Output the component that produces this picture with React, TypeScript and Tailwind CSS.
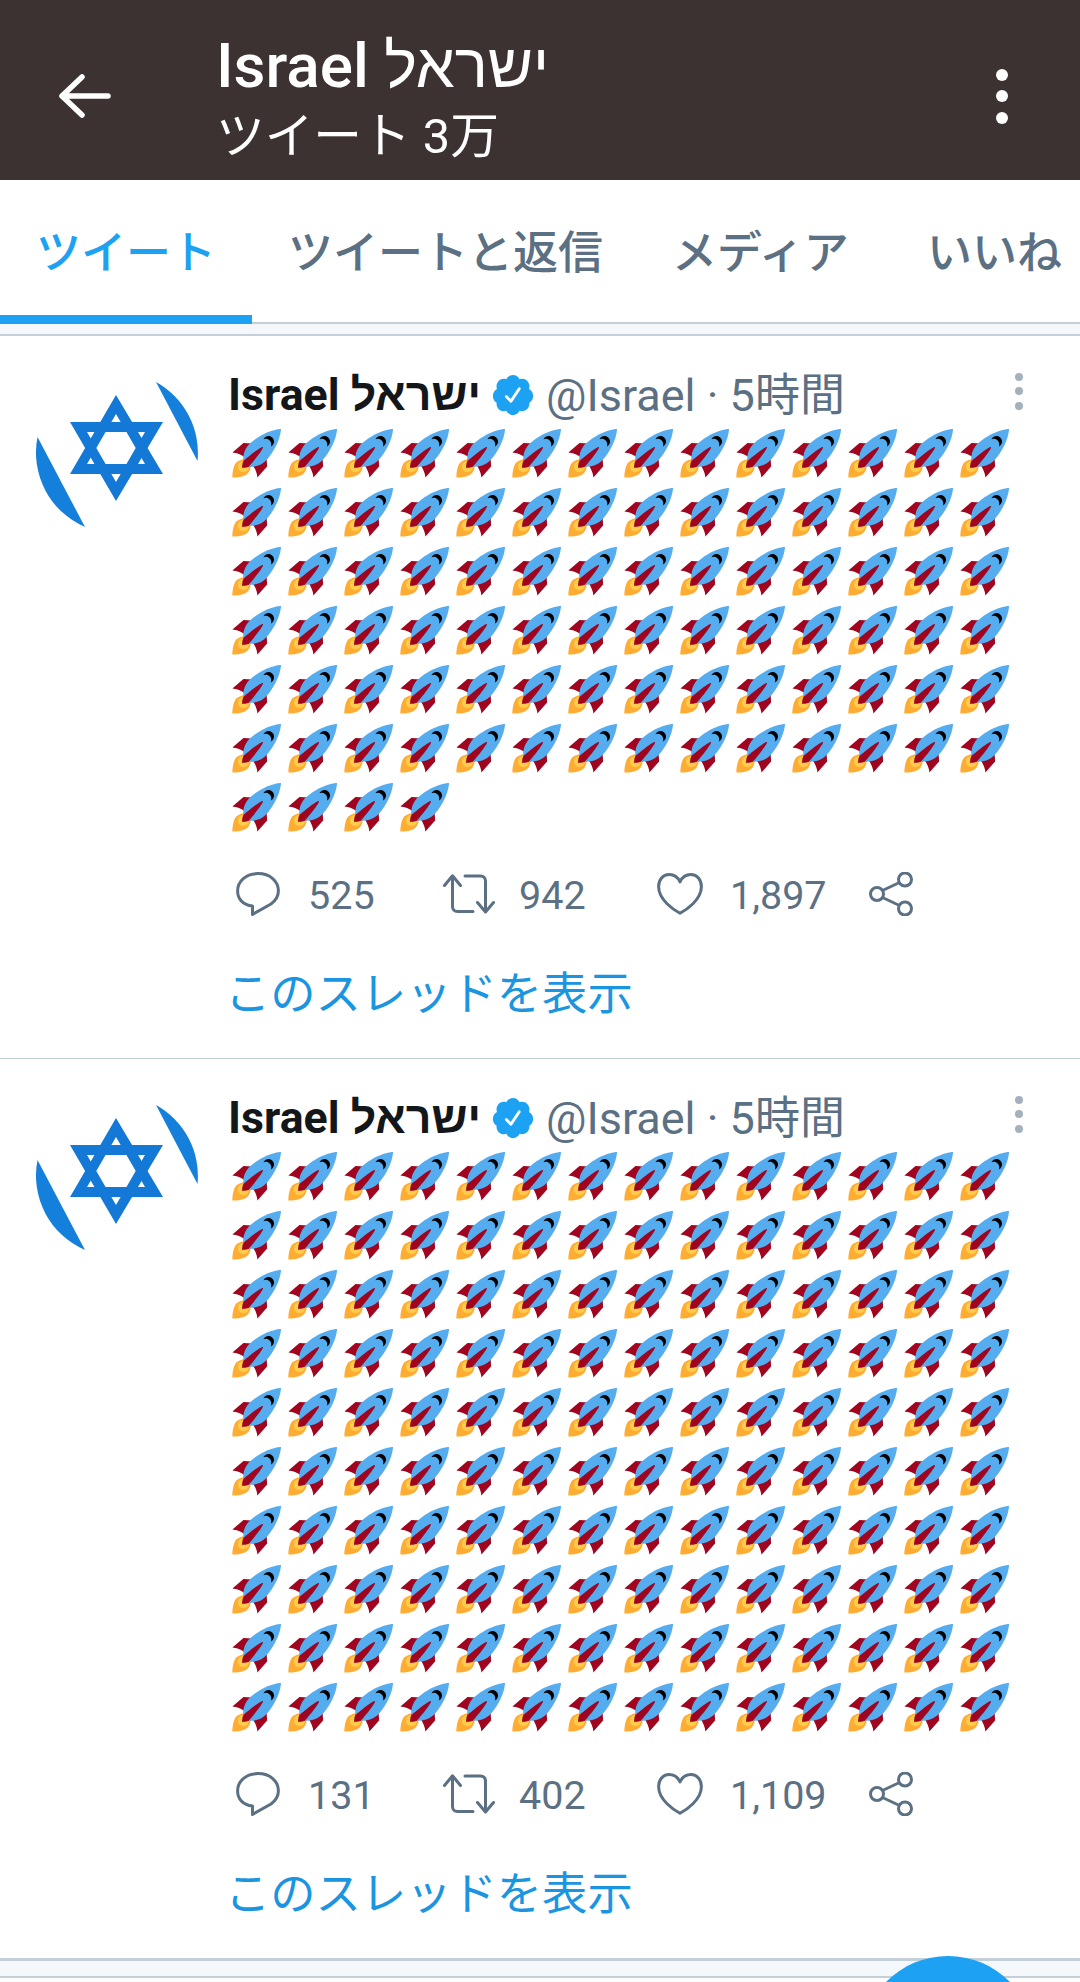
const font = "font-['Roboto','Liberation_Sans','Noto_Sans_CJK_JP',sans-serif]"

function Rocket() {
  return (
    <svg viewBox="0 0 36 36" className="w-[50px] h-[50px]">
      <path fill="#A0041E" d="M1 17l8-7 16 1 1 16-7 8s.001-5.999-6-12-12-6-12-6z" />
      <path fill="#FFAC33" d="M.973 35s-.036-7.979 2.985-11S15 21.187 15 21.187 14.999 29 11.999 32c-3 3-11.026 3-11.026 3z" />
      <circle fill="#FFCC4D" cx="8.999" cy="27" r="4" />
      <path fill="#55ACEE" d="M35.999 0s-10 0-22 10c-6 5-6 14-4 16s11 2 16-4c10-12 10-22 10-22z" />
      <path d="M26.999 5c-1.623 0-3.013.971-3.641 2.36.502-.227 1.055-.36 1.641-.36 2.209 0 4 1.791 4 4 0 .586-.133 1.139-.359 1.64 1.389-.627 2.359-2.017 2.359-3.64 0-2.209-1.791-4-4-4z" />
      <path fill="#A0041E" d="M8 28s0-4 1-5 13.001-10.999 14-10-9.001 13-10.001 14S8 28 8 28z" />
    </svg>
  )
}

function Avatar() {
  return (
    <svg viewBox="0 0 162 162" className="w-[162px] h-[162px]">
      <path fill="#1580dc" d="M120 8A81 81 0 0 1 161.5 87Z" />
      <path fill="#1580dc" d="M1.5 63A81 81 0 0 0 49 153Z" />
      <path fill="#1378d6" fillRule="evenodd" d="M80 21L127 100H34ZM80 40L51 90H109Z" />
      <path fill="#1378d6" fillRule="evenodd" d="M80 127L127 48H34ZM80 108L109 58H51Z" />
    </svg>
  )
}

function Badge() {
  return (
    <svg viewBox="0 0 24 24" className="w-[46px] h-[46px] shrink-0" fill="#1da1f2">
      <path d="M22.5 12.5c0-1.58-.875-2.95-2.148-3.6.154-.435.238-.905.238-1.4 0-2.21-1.71-3.998-3.818-3.998-.47 0-.92.084-1.336.25C14.818 2.415 13.51 1.5 12 1.5s-2.816.917-3.437 2.25c-.415-.165-.866-.25-1.336-.25-2.11 0-3.818 1.79-3.818 4 0 .494.083.964.237 1.4-1.272.65-2.147 2.018-2.147 3.6 0 1.495.782 2.798 1.942 3.486-.02.17-.032.34-.032.514 0 2.21 1.708 4 3.818 4 .47 0 .92-.086 1.335-.25.62 1.334 1.926 2.25 3.437 2.25 1.512 0 2.818-.916 3.437-2.25.415.163.865.248 1.336.248 2.11 0 3.818-1.79 3.818-4 0-.174-.012-.344-.033-.513 1.158-.687 1.943-1.99 1.943-3.484zm-6.616-3.334l-4.334 6.5c-.145.217-.382.334-.625.334-.143 0-.288-.04-.416-.126l-.115-.094-2.415-2.415c-.293-.293-.293-.768 0-1.06s.768-.294 1.06 0l1.77 1.767 3.825-5.74c.23-.345.696-.436 1.04-.207.346.23.44.696.21 1.04z" />
    </svg>
  )
}

function CommentIcon() {
  return (
    <svg viewBox="0 0 44 44" className="w-[44px] h-[44px]" fill="none" stroke="#5b7083" strokeWidth="3" strokeLinejoin="round">
      <path d="M16.5 42.4V34C7 33 1.6 27 1.6 19C1.6 9 10 1.6 22 1.6C34 1.6 42.4 9 42.4 19C42.4 25 39 29 35 32Z" />
    </svg>
  )
}

function RetweetIcon() {
  return (
    <svg viewBox="0 0 52 40" className="w-[52px] h-[40px]" fill="none" stroke="#5b7083" strokeWidth="3" strokeLinecap="round" strokeLinejoin="round">
      <path d="M1.5 11.5L9.5 1.8L17.5 11.5M9.5 2.5V32.5C9.5 35.5 11.5 37.5 14.5 37.5H30" />
      <path d="M50.5 28.5L42.5 38L34.5 28.5M42.5 37.5V7C42.5 4 40.5 2 37.5 2H22" />
    </svg>
  )
}

function HeartIcon() {
  return (
    <svg viewBox="0 0 46 42" className="w-[46px] h-[42px]" fill="none" stroke="#5b7083" strokeWidth="3" strokeLinejoin="round">
      <path d="M23 40.2C17 37 1.6 27 1.6 13.5C1.6 6.5 6 1.6 12 1.6C17 1.6 21 4.5 23 9C25 4.5 29 1.6 34 1.6C40 1.6 44.4 6.5 44.4 13.5C44.4 27 29 37 23 40.2Z" />
    </svg>
  )
}

function ShareIcon() {
  return (
    <svg viewBox="0 0 44 44" className="w-[44px] h-[44px]" fill="none" stroke="#5b7083" strokeWidth="3">
      <circle cx="8" cy="22" r="6.5" />
      <circle cx="36" cy="7.5" r="6.5" />
      <circle cx="36" cy="36.5" r="6.5" />
      <path d="M13.5 18.5L30.5 10.5M13.5 25.5L30.5 33.5" />
    </svg>
  )
}

function Tweet({ rockets, replies, retweets, likes }: { rockets: number; replies: string; retweets: string; likes: string }) {
  return (
    <div className="flex pl-[36px] border-b border-[#c4cfd8]">
      <div className="w-[162px] pt-[38px] shrink-0">
        <Avatar />
      </div>
      <div className="ml-[33px] w-[849px] flex flex-col pb-[34px]">
        <div className="flex items-center h-[56px] mt-[31px] mb-[6px] -ml-[3px]">
          <span className="text-[44.7px] font-bold text-[#14171a] leading-none whitespace-nowrap">Israel ישראל</span>
          <span className="ml-[9px]"><Badge /></span>
          <span className="ml-[10px] text-[45px] text-[#5b7083] leading-none whitespace-nowrap">@Israel · 5時間</span>
          <div className="ml-auto mr-[57px] mb-[8px] flex flex-col gap-[6.5px]">
            <span className="w-[8px] h-[8px] rounded-full bg-[#a3b1bc]" />
            <span className="w-[8px] h-[8px] rounded-full bg-[#a3b1bc]" />
            <span className="w-[8px] h-[8px] rounded-full bg-[#a3b1bc]" />
          </div>
        </div>
        <div className="grid grid-cols-[repeat(14,56px)] auto-rows-[59px]">
          {Array.from({ length: rockets }).map((_, i) => (
            <Rocket key={i} />
          ))}
        </div>
        <div className="flex items-center h-[50px] mt-[27px] pl-[5px] text-[#5b7083] text-[39.5px]">
          <div className="flex items-center w-[207px]">
            <CommentIcon />
            <span className="ml-[28px] mt-[3px]">{replies}</span>
          </div>
          <div className="flex items-center w-[214px]">
            <RetweetIcon />
            <span className="ml-[24px] mt-[3px]">{retweets}</span>
          </div>
          <div className="flex items-center w-[212px]">
            <HeartIcon />
            <span className="ml-[27px] mt-[3px]">{likes}</span>
          </div>
          <ShareIcon />
        </div>
        <div className="mt-[50px] h-[55px] -ml-[6px] text-[45.3px] leading-[52px] text-[#1b95e0] whitespace-nowrap">このスレッドを表示</div>
      </div>
    </div>
  )
}

export default function App() {
  return (
    <div className={`relative w-[1080px] h-[1982px] overflow-hidden bg-white ${font}`}>
      {/* Top bar */}
      <header className="flex items-center h-[180px] pt-[12px] bg-[#3c3231] text-white">
        <svg viewBox="0 0 52 44" className="ml-[59px] w-[52px] h-[44px]" fill="none" stroke="white" strokeWidth="5.5" strokeLinecap="round" strokeLinejoin="round">
          <path d="M23 3L3 22L23 41M3 22H49" />
        </svg>
        <div className="ml-[105px] mt-[10px] flex flex-col whitespace-nowrap">
          <span className="text-[62px] font-medium leading-[72px]">Israel ישראל</span>
          <span className="text-[48.7px] leading-[70px]">ツイート 3万</span>
        </div>
        <div className="ml-auto mr-[72px] flex flex-col gap-[9.5px]">
          <span className="w-[12px] h-[12px] rounded-full bg-white" />
          <span className="w-[12px] h-[12px] rounded-full bg-white" />
          <span className="w-[12px] h-[12px] rounded-full bg-white" />
        </div>
      </header>

      {/* Tabs */}
      <nav className="flex h-[144px] border-b-2 border-[#c4cfd8] text-[45px] font-medium text-[#5b7083] whitespace-nowrap">
        <div className="w-[252px] pl-[36px] pt-[40px] h-[144px] border-b-[9px] border-[#1da1f2] text-[#1da1f2]">ツイート</div>
        <div className="ml-[36px] pt-[40px]">ツイートと返信</div>
        <div className="ml-[69px] pt-[40px]">メディア</div>
        <div className="ml-[78px] pt-[40px]">いいね</div>
      </nav>
      <div className="h-[12px] bg-[#f5f8fa] border-b-2 border-[#c4cfd8]" />

      <Tweet rockets={88} replies="525" retweets="942" likes="1,897" />
      <Tweet rockets={140} replies="131" retweets="402" likes="1,109" />

      <div className="h-[19px] bg-[#f5f8fa] border-y-2 border-[#c4cfd8]" />

      {/* Floating button, cut off by the bottom edge */}
      <div className="absolute left-[861px] top-[1956px] w-[174px] h-[174px] rounded-full bg-[#1da1f2]" />
    </div>
  )
}
